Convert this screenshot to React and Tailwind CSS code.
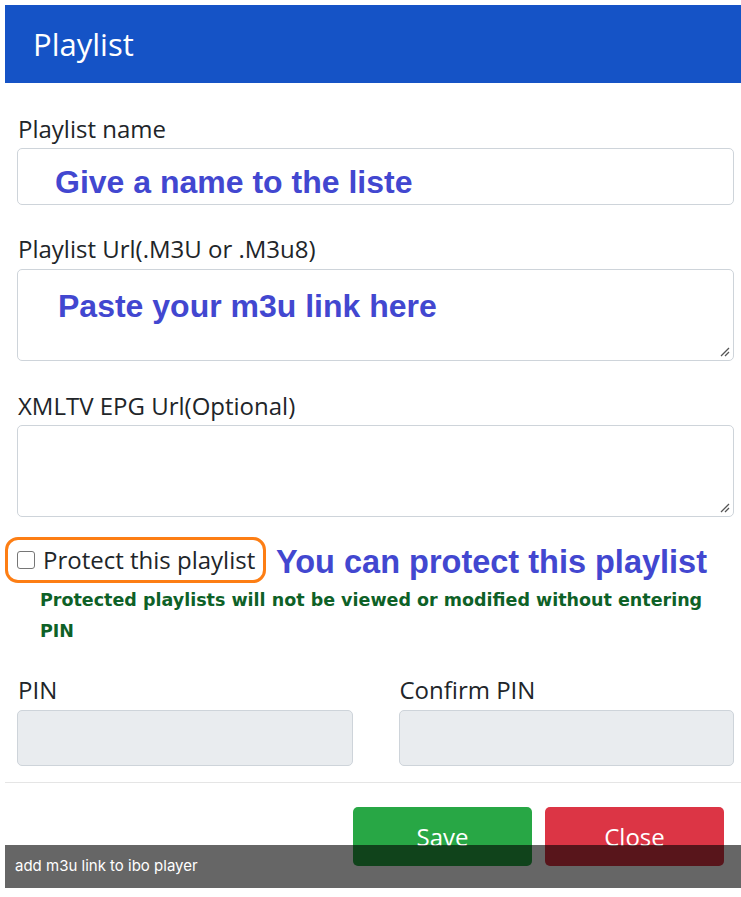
import React from "react";

const ui = { fontFamily: '"Open Sans", "Noto Sans", sans-serif' };
const arialB = { fontFamily: '"Liberation Sans", Arial, sans-serif' };
const verdB = { fontFamily: '"DejaVu Sans", Verdana, sans-serif' };

function Label({ children, className = "" }) {
  return (
    <div className={"h-[33px] pl-[1px] text-[24px] leading-[33px] text-[#212529] " + className} style={ui}>
      {children}
    </div>
  );
}

function Grip() {
  return (
    <svg className="absolute bottom-[3px] right-[3px]" width="11" height="11" viewBox="0 0 11 11">
      <path d="M10 2 L2 10 M10 6 L6 10" stroke="#555" strokeWidth="1.3" />
    </svg>
  );
}

export default function App() {
  return (
    <div className="relative w-full overflow-hidden bg-white" style={{ height: 897 }}>
      <div className="ml-[5px] mt-[5px] w-[741px]">
        {/* header */}
        <div className="flex h-[78px] items-center bg-[#1553c6] pl-[28px]">
          <span className="text-[31px] text-white" style={ui}>Playlist</span>
        </div>

        <div className="px-[12px]">
          <Label className="mt-[29px]">Playlist name</Label>
          <div className="mt-[3px] flex h-[57px] items-center rounded-[5px] border border-[#ced4da] pl-[37px] pt-[11px]">
            <span className="text-[32px] font-bold leading-[37px] text-[#4247d0]" style={arialB}>Give a name to the liste</span>
          </div>

          <Label className="mt-[27px]">Playlist Url(.M3U or .M3u8)</Label>
          <div className="relative mt-[4px] h-[92px] rounded-[5px] border border-[#ced4da] pl-[40px] pt-[18px]">
            <span className="text-[32px] font-bold leading-[37px] text-[#4247d0]" style={arialB}>Paste your m3u link here</span>
            <Grip />
          </div>

          <Label className="mt-[28px]">XMLTV EPG Url(Optional)</Label>
          <div className="relative mt-[3px] h-[92px] rounded-[5px] border border-[#ced4da]">
            <Grip />
          </div>
        </div>

        {/* protect row */}
        <div className="mt-[20px] flex items-center">
          <div className="flex h-[46px] w-[261px] items-center rounded-[13px] border-[3px] border-[#fd7e14] pl-[9px]">
            <span className="h-[18px] w-[18px] rounded-[3px] border border-[#767676] bg-white" />
            <span className="ml-[8px] text-[24px] text-[#212529]" style={ui}>Protect this playlist</span>
          </div>
          <span className="ml-[10px] pt-[4px] text-[32.5px] font-bold leading-[37px] text-[#4247d0]" style={arialB}>You can protect this playlist</span>
        </div>

        <div className="mt-[2px] pl-[35px] pr-[20px] text-[17.5px] font-bold leading-[31px] text-[#0e6127]" style={verdB}>
          Protected playlists will not be viewed or modified without entering PIN
        </div>

        {/* PIN */}
        <div className="mt-[26px] grid grid-cols-2 gap-x-[46px] px-[12px]">
          <div>
            <Label>PIN</Label>
            <div className="mt-[4px] h-[56px] rounded-[5px] border border-[#ced4da] bg-[#e9ecef]" />
          </div>
          <div>
            <Label>Confirm PIN</Label>
            <div className="mt-[4px] h-[56px] rounded-[5px] border border-[#ced4da] bg-[#e9ecef]" />
          </div>
        </div>

        <div className="mt-[16px] h-px bg-[#e5e5e5]" />

        <div className="mt-[24px] flex gap-[13px] pl-[348px]">
          <div className="flex h-[59px] w-[179px] items-center justify-center rounded-[5px] bg-[#28a745] text-[24px] text-white" style={ui}>Save</div>
          <div className="flex h-[59px] w-[179px] items-center justify-center rounded-[5px] bg-[#dc3545] text-[24px] text-white" style={ui}>Close</div>
        </div>
      </div>

      {/* caption overlay */}
      <div className="absolute left-[5px] top-[845px] flex h-[43px] w-[736px] items-center bg-black/60 pl-[10px]">
        <span className="text-[15px] text-white" style={{ fontFamily: 'Inter, "Liberation Sans", sans-serif' }}>add m3u link to ibo player</span>
      </div>
    </div>
  );
}
